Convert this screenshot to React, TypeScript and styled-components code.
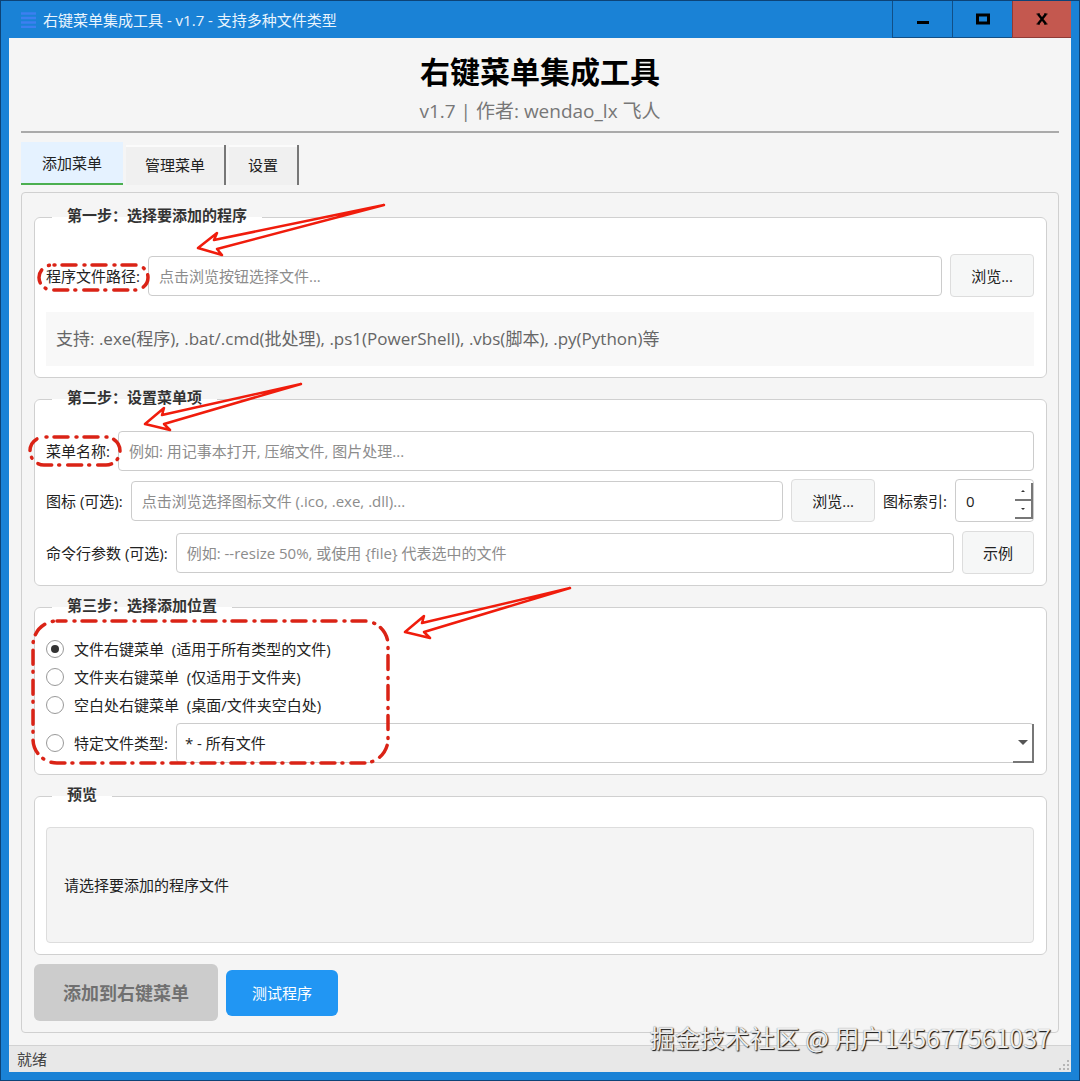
import React, { useState } from "react";
import styled, { createGlobalStyle } from "styled-components";

const GlobalStyle = createGlobalStyle`
  *, *::before, *::after { box-sizing: border-box; }
  body {
    margin: 0;
    font-family: "Open Sans", "Noto Sans CJK SC", sans-serif;
    font-size: 15px;
    line-height: 20px;
    color: #222;
  }
  button, input, select { font: inherit; color: inherit; margin: 0; }
`;

const Window = styled.div`
  position: relative;
  display: flex;
  flex-direction: column;
  min-height: 100vh;
  padding: 0 8px 8px;
  border: 1px solid #0d4377;
  background: #1a82d6;
`;

const TitleBar = styled.header`
  display: flex;
  align-items: stretch;
  height: 37px;
  padding-left: 12px;
  color: #e9f4fd;
`;

const TitleText = styled.div`
  flex: 1;
  display: flex;
  align-items: center;
  gap: 7px;
`;

const CaptionButton = styled.button<{ $danger?: boolean }>`
  display: flex;
  align-items: center;
  justify-content: center;
  width: ${(p) => (p.$danger ? 59 : 60)}px;
  padding: 0;
  border: 1px solid ${(p) => (p.$danger ? "#8f3a36" : "#124f86")};
  border-top: 0;
  border-right: 0;
  background: ${(p) => (p.$danger ? "#c4584f" : "#1a82d6")};
`;

const Client = styled.main`
  flex: 1;
  display: flex;
  flex-direction: column;
  background: #f5f5f5;
`;

const Content = styled.div`
  flex: 1;
  display: flex;
  flex-direction: column;
  padding: 12px;
`;

const AppTitle = styled.h1`
  margin: 0;
  font-size: 30px;
  line-height: 44px;
  font-weight: 700;
  text-align: center;
  color: #000;
`;

const AppMeta = styled.p`
  margin: 0;
  font-size: 19px;
  line-height: 34px;
  text-align: center;
  color: #777;
`;

const Divider = styled.hr`
  width: 100%;
  height: 2px;
  margin: 3px 0 9px;
  border: 0;
  background: #aaa;
`;

const Tabs = styled.div`
  display: flex;
  align-items: flex-end;
  gap: 3px;
  height: 43px;
  margin-bottom: 7px;
`;

const Tab = styled.button<{ $active?: boolean }>`
  height: ${(p) => (p.$active ? 43 : 40)}px;
  padding: 0 ${(p) => (p.$active ? 21 : 19)}px;
  border: 0 solid #777;
  border-right-width: ${(p) => (p.$active ? 0 : 2)}px;
  background: ${(p) => (p.$active ? "#e5f2ff" : "#f0f0f0")};
  ${(p) =>
    p.$active
      ? "border-bottom: 2px solid #4caf50;"
      : "box-shadow: inset 0 2px 0 #fbfbfb;"}
`;

const Pane = styled.section`
  flex: 1;
  display: flex;
  flex-direction: column;
  gap: 9px;
  padding: 12px 11px 11px 12px;
  border: 1px solid #d0d0d0;
  border-radius: 4px;
`;

const Group = styled.fieldset<{ $top: number }>`
  display: flex;
  flex-direction: column;
  min-width: 0;
  margin: 0;
  padding: ${(p) => p.$top}px 12px 11px 11px;
  border: 1px solid #d0d0d0;
  border-radius: 6px;
  background: #fff;
`;

const Legend = styled.legend`
  margin-left: 6px;
  padding: 0 15px 4px;
  font-weight: 700;
  color: #333;
`;

const Row = styled.div<{ $gap?: number }>`
  display: flex;
  align-items: center;
  gap: 8px;
  margin-bottom: ${(p) => p.$gap ?? 0}px;
`;

const Label = styled.label`
  white-space: pre;
`;

const TextInput = styled.input`
  flex: 1;
  min-width: 0;
  height: 40px;
  padding: 0 10px;
  border: 1px solid #ccc;
  border-radius: 4px;
  background: #fff;
  &::placeholder { color: #8c8c8c; opacity: 1; }
`;

const PlainButton = styled.button`
  height: 43px;
  padding: 0 20px;
  border: 1px solid #ddd;
  border-radius: 4px;
  background: #f6f7f7;
`;

const Hint = styled.p`
  margin: 0;
  padding: 16px 10px;
  font-size: 17px;
  line-height: 22px;
  color: #666;
  background: #f8f8f8;
`;

const SpinBox = styled.div`
  display: flex;
  width: 79px;
  height: 43px;
  padding: 3px 0 2px 10px;
  border: 1px solid #ccc;
  border-radius: 4px;
`;

const SpinInput = styled.input`
  flex: 1;
  min-width: 0;
  padding: 0;
  border: 0;
  background: transparent;
  appearance: textfield;
  &::-webkit-inner-spin-button { appearance: none; }
`;

const SpinButtons = styled.div`
  display: grid;
  grid-template-rows: 1fr 1fr;
  width: 18px;
`;

const SpinButton = styled.button`
  display: flex;
  align-items: center;
  justify-content: center;
  padding: 0;
  border: solid #777;
  border-width: 0 2px 2px 0;
  background: #fff;
`;

const Radio = styled.input`
  appearance: none;
  display: grid;
  place-items: center;
  width: 18px;
  height: 18px;
  border: 1px solid #999;
  border-radius: 50%;
  background: #fff;
  &:checked::before {
    content: "";
    width: 8px;
    height: 8px;
    border-radius: 50%;
    background: #333;
  }
`;

const RadioRow = styled.div`
  display: flex;
  align-items: center;
  gap: 10px;
  height: 28px;
`;

const TypeRow = styled(RadioRow)`
  height: 40px;
  margin-top: 4px;
`;

const SelectWrap = styled.div`
  flex: 1;
  position: relative;
  margin-left: -2px;
`;

const Select = styled.select`
  appearance: none;
  width: 100%;
  height: 40px;
  padding: 0 8px;
  border: 1px solid #ccc;
  border-radius: 4px;
  background: #fff;
`;

const DropMark = styled.span`
  position: absolute;
  top: 1px;
  right: 0;
  bottom: 0;
  display: flex;
  align-items: center;
  justify-content: center;
  width: 21px;
  border: solid #777;
  border-width: 0 2px 2px 0;
  pointer-events: none;
`;

const Preview = styled.div`
  display: flex;
  align-items: center;
  min-height: 116px;
  padding: 0 17px;
  border: 1px solid #ddd;
  border-radius: 4px;
  background: #f4f4f4;
`;

const Actions = styled.div`
  display: flex;
  align-items: center;
  gap: 8px;
`;

const AddButton = styled.button`
  height: 57px;
  padding: 0 29px;
  border: 0;
  border-radius: 6px;
  font-size: 18px;
  font-weight: 700;
  color: #707070;
  background: #ccc;
`;

const TestButton = styled.button`
  height: 46px;
  padding: 0 26px;
  border: 0;
  border-radius: 6px;
  color: #fff;
  background: #2196f3;
`;

const StatusBar = styled.footer`
  display: flex;
  align-items: center;
  justify-content: space-between;
  height: 27px;
  padding: 0 1px 0 8px;
  border-top: 1px solid #d2d2d2;
  color: #444;
  background: #e8e8e8;
`;

const Grip = styled.svg`
  align-self: flex-end;
`;

const Marks = styled.svg`
  position: absolute;
  top: -1px;
  left: -1px;
  pointer-events: none;
`;

const Watermark = styled.div`
  position: absolute;
  right: 28px;
  bottom: 25px;
  font-family: "Noto Sans CJK SC", sans-serif;
  font-size: 25px;
  line-height: 36px;
  white-space: nowrap;
  color: #ececec;
  text-shadow: 1px 1px 1px #111, 0 0 1px #777;
  pointer-events: none;
`;

const targets = [
  "文件右键菜单  (适用于所有类型的文件)",
  "文件夹右键菜单  (仅适用于文件夹)",
  "空白处右键菜单  (桌面/文件夹空白处)",
];

const arrows = [
  "M198 248L217 233L214 240L384 205L217 249L222 255Z",
  "M145 424L164 408L162 415L301 384L164 424L170 430Z",
  "M405 632L424 616L422 623L570 588L424 632L430 638Z",
];

const rings = [
  { x: 39, y: 265, w: 109, h: 25, r: 13, offset: 20 },
  { x: 30, y: 437, w: 90, h: 28, r: 14, offset: 20 },
  { x: 33, y: 621, w: 355, h: 142, r: 24, offset: 5 },
];

const gripDots = [
  [10, 0], [10, 4], [6, 4], [10, 8], [6, 8], [2, 8],
];

export default function App() {
  const [target, setTarget] = useState(0);
  const [index, setIndex] = useState(0);

  return (
    <>
      <GlobalStyle />
      <Window>
        <TitleBar>
          <TitleText>
            <svg width="15" height="16" viewBox="0 0 15 16" aria-hidden="true">
              <path d="M0 1.5H15M0 6H15M0 10.5H15M0 15H15" stroke="#3d7ff0" strokeWidth="2.5" />
            </svg>
            <span>右键菜单集成工具 - v1.7 - 支持多种文件类型</span>
          </TitleText>
          <CaptionButton aria-label="最小化">
            <svg width="14" height="12" viewBox="0 0 14 12"><path d="M1 9.5H13" stroke="#000" strokeWidth="3" /></svg>
          </CaptionButton>
          <CaptionButton aria-label="最大化">
            <svg width="14" height="12" viewBox="0 0 14 12"><rect x="1.5" y="2" width="11" height="8" fill="none" stroke="#000" strokeWidth="3" /></svg>
          </CaptionButton>
          <CaptionButton $danger aria-label="关闭">
            <svg width="12" height="12" viewBox="0 0 12 12">
              <path d="M2 1L10 11M10 1L2 11" stroke="#000" strokeWidth="2.4" />
              <path d="M0.5 1H4M8 1H11.5M0.5 11H4M8 11H11.5" stroke="#000" strokeWidth="1.2" />
            </svg>
          </CaptionButton>
        </TitleBar>

        <Client>
          <Content>
            <AppTitle>右键菜单集成工具</AppTitle>
            <AppMeta>v1.7 | 作者: wendao_lx 飞人</AppMeta>
            <Divider />
            <Tabs role="tablist">
              <Tab role="tab" aria-selected="true" $active>添加菜单</Tab>
              <Tab role="tab" aria-selected="false">管理菜单</Tab>
              <Tab role="tab" aria-selected="false">设置</Tab>
            </Tabs>

            <Pane>
              <Group $top={25}>
                <Legend>第一步：选择要添加的程序</Legend>
                <Row $gap={15}>
                  <Label htmlFor="program">程序文件路径:</Label>
                  <TextInput id="program" placeholder="点击浏览按钮选择文件..." />
                  <PlainButton>浏览...</PlainButton>
                </Row>
                <Hint>支持: .exe(程序), .bat/.cmd(批处理), .ps1(PowerShell), .vbs(脚本), .py(Python)等</Hint>
              </Group>

              <Group $top={20}>
                <Legend>第二步：设置菜单项</Legend>
                <Row $gap={8}>
                  <Label htmlFor="name">菜单名称:</Label>
                  <TextInput id="name" placeholder="例如: 用记事本打开, 压缩文件, 图片处理..." />
                </Row>
                <Row $gap={9}>
                  <Label htmlFor="icon">图标 (可选):</Label>
                  <TextInput id="icon" placeholder="点击浏览选择图标文件 (.ico, .exe, .dll)..." />
                  <PlainButton>浏览...</PlainButton>
                  <Label htmlFor="index">图标索引:</Label>
                  <SpinBox>
                    <SpinInput
                      id="index"
                      type="number"
                      value={index}
                      onChange={(e) => setIndex(Number(e.target.value))}
                    />
                    <SpinButtons>
                      <SpinButton aria-label="增加" onClick={() => setIndex(index + 1)}>
                        <svg width="4" height="2"><path d="M0 2L2 0L4 2Z" fill="#333" /></svg>
                      </SpinButton>
                      <SpinButton aria-label="减少" onClick={() => setIndex(Math.max(0, index - 1))}>
                        <svg width="4" height="2"><path d="M0 0L2 2L4 0Z" fill="#333" /></svg>
                      </SpinButton>
                    </SpinButtons>
                  </SpinBox>
                </Row>
                <Row>
                  <Label htmlFor="args">命令行参数 (可选):</Label>
                  <TextInput id="args" placeholder="例如: --resize 50%, 或使用 {file} 代表选中的文件" />
                  <PlainButton>示例</PlainButton>
                </Row>
              </Group>

              <Group $top={16}>
                <Legend>第三步：选择添加位置</Legend>
                {targets.map((text, i) => (
                  <RadioRow key={text}>
                    <Radio type="radio" name="target" id={`target${i}`} checked={target === i} onChange={() => setTarget(i)} />
                    <Label htmlFor={`target${i}`}>{text}</Label>
                  </RadioRow>
                ))}
                <TypeRow>
                  <Radio type="radio" name="target" id="target3" checked={target === 3} onChange={() => setTarget(3)} />
                  <Label htmlFor="target3">特定文件类型:</Label>
                  <SelectWrap>
                    <Select aria-label="特定文件类型" defaultValue="*">
                      <option value="*">* - 所有文件</option>
                    </Select>
                    <DropMark>
                      <svg width="10" height="6" viewBox="0 0 10 6"><path d="M0 0H10L5 5Z" fill="#555" /></svg>
                    </DropMark>
                  </SelectWrap>
                </TypeRow>
              </Group>

              <Group $top={19}>
                <Legend>预览</Legend>
                <Preview>请选择要添加的程序文件</Preview>
              </Group>

              <Actions>
                <AddButton disabled>添加到右键菜单</AddButton>
                <TestButton>测试程序</TestButton>
              </Actions>
            </Pane>
          </Content>

          <StatusBar>
            <span>就绪</span>
            <Grip width="13" height="12" viewBox="0 0 13 12" aria-hidden="true">
              {gripDots.map(([x, y]) => (
                <rect key={`${x}-${y}`} x={x} y={y} width="2" height="2" fill="#b5b5b5" />
              ))}
            </Grip>
          </StatusBar>
        </Client>

        <Marks width="600" height="780" viewBox="0 0 600 780" fill="none" aria-hidden="true">
          {rings.map((r) => (
            <rect
              key={r.y}
              x={r.x}
              y={r.y}
              width={r.w}
              height={r.h}
              rx={r.r}
              stroke="#da2316"
              strokeWidth="3.5"
              strokeLinecap="round"
              strokeDasharray="14 8 1 7"
              strokeDashoffset={r.offset}
            />
          ))}
          {arrows.map((d) => (
            <path key={d} d={d} stroke="#f01c0c" strokeWidth="2.5" strokeLinejoin="round" />
          ))}
        </Marks>
        <Watermark>掘金技术社区 @ 用户145677561037</Watermark>
      </Window>
    </>
  );
}
